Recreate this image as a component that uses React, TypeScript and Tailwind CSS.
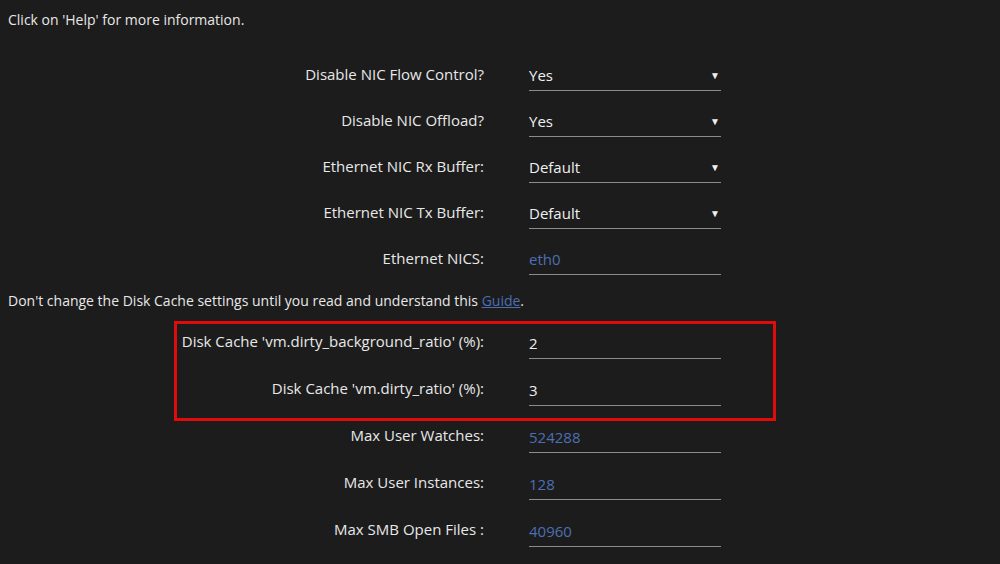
import React from 'react'

type Row = {
  label: string
  value: string
  select?: boolean
  accent?: boolean
}

const topRows: Row[] = [
  { label: 'Disable NIC Flow Control?', value: 'Yes', select: true },
  { label: 'Disable NIC Offload?', value: 'Yes', select: true },
  { label: 'Ethernet NIC Rx Buffer:', value: 'Default', select: true },
  { label: 'Ethernet NIC Tx Buffer:', value: 'Default', select: true },
  { label: 'Ethernet NICS:', value: 'eth0', accent: true },
]

const cacheRows: Row[] = [
  { label: "Disk Cache 'vm.dirty_background_ratio' (%):", value: '2' },
  { label: "Disk Cache 'vm.dirty_ratio' (%):", value: '3' },
]

const bottomRows: Row[] = [
  { label: 'Max User Watches:', value: '524288', accent: true },
  { label: 'Max User Instances:', value: '128', accent: true },
  { label: 'Max SMB Open Files :', value: '40960', accent: true },
]

function SettingRow({ row, tall }: { row: Row; tall?: boolean }) {
  return (
    <div className={tall ? 'flex h-[47px] items-center' : 'flex h-[46px] items-center'}>
      <div className="w-[484px] shrink-0 pb-[3px] text-right text-[#e8e8e8]">{row.label}</div>
      <div className="ml-[45px] flex h-[32px] w-[192px] items-center justify-between border-b border-[#8c8c8c] pt-[1px]">
        <span className={row.accent ? 'text-[#4c6fb3]' : 'text-[#f0f0f0]'}>{row.value}</span>
        {row.select && <span className="mr-[1px] text-[10px] text-[#f0f0f0]">▼</span>}
      </div>
    </div>
  )
}

export default function App() {
  return (
    <div
      className="h-[564px] w-[1000px] overflow-hidden bg-[#1c1c1c] text-[15px] leading-[20px] text-[#e8e8e8]"
      style={{ fontFamily: '"Open Sans", "Noto Sans", sans-serif' }}
    >
      <p className="pl-[8px] pt-[10px] text-[14px]">Click on 'Help' for more information.</p>

      <div className="mt-[22px]">
        {topRows.map((r) => (
          <SettingRow key={r.label} row={r} />
        ))}
      </div>

      <p className="mt-[9px] pl-[8px] text-[14px]">
        Don't change the Disk Cache settings until you read and understand this{' '}
        <a className="text-[#4c6fb3] underline">Guide</a>.
      </p>

      <div className="relative mt-[8px]">
        {cacheRows.map((r) => (
          <SettingRow key={r.label} row={r} tall />
        ))}
        {/* red highlight around the disk cache rows */}
        <div className="pointer-events-none absolute left-[174px] top-[2px] h-[100px] w-[602px] border-[3px] border-[#e00b0b]" />
      </div>

      <div>
        {bottomRows.map((r) => (
          <SettingRow key={r.label} row={r} tall />
        ))}
      </div>
    </div>
  )
}
